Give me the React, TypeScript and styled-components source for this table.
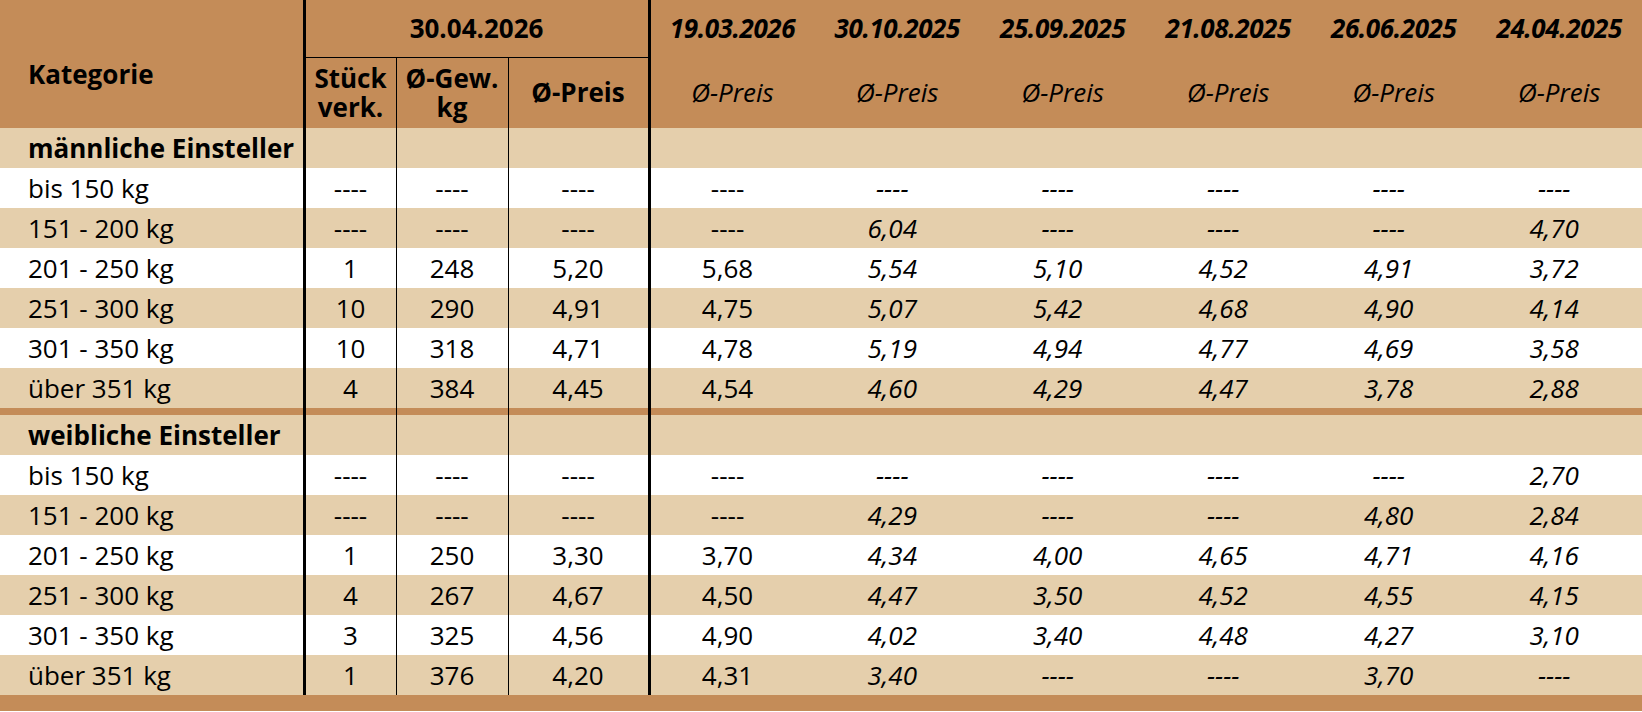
import React from 'react'
import styled, { createGlobalStyle } from 'styled-components'

const BROWN = '#c48c58'
const BEIGE = '#e5cfac'

const GlobalStyle = createGlobalStyle`
  html, body {
    margin: 0;
    padding: 0;
    background: #ffffff;
  }
  body {
    font-family: "Open Sans", "Liberation Sans", sans-serif;
    color: #000;
  }
`

const Table = styled.table`
  width: 1642px;
  border-collapse: collapse;
  table-layout: fixed;
  font-size: 26px;
`

const HeadRow = styled.tr<{ $h: number }>`
  height: ${p => p.$h}px;
  background: ${BROWN};
`

const Th = styled.th<{ $italic?: boolean; $weight?: number; $line?: 'thick' | 'thin'; $under?: boolean }>`
  padding: 0;
  font-weight: ${p => p.$weight ?? 700};
  font-style: ${p => (p.$italic ? 'italic' : 'normal')};
  letter-spacing: ${p => (p.$italic && (p.$weight ?? 700) === 700 ? '-0.4px' : 'normal')};
  text-align: center;
  vertical-align: middle;
  line-height: 29px;
  border-left: ${p => (p.$line === 'thick' ? '3px solid #000' : p.$line === 'thin' ? '1px solid #000' : 'none')};
  border-bottom: ${p => (p.$under ? '1px solid #000' : 'none')};
`

const KategorieTh = styled.th`
  padding: 20px 0 0 28px;
  text-align: left;
  vertical-align: middle;
  font-weight: 700;
`

const Row = styled.tr<{ $shade: boolean }>`
  height: 40px;
  background: ${p => (p.$shade ? BEIGE : '#ffffff')};
`

const BandRow = styled.tr<{ $h: number }>`
  height: ${p => p.$h}px;
  background: ${BROWN};
`

const Label = styled.td<{ $bold?: boolean }>`
  padding: 0 0 0 28px;
  font-weight: ${p => (p.$bold ? 700 : 400)};
  white-space: nowrap;
  line-height: 38px;
`

const Cell = styled.td<{ $italic?: boolean; $line?: 'thick' | 'thin'; $pad?: number }>`
  padding: 0 ${p => p.$pad ?? 0}px 0 0;
  text-align: center;
  font-style: ${p => (p.$italic ? 'italic' : 'normal')};
  line-height: 38px;
  border-left: ${p => (p.$line === 'thick' ? '3px solid #000' : p.$line === 'thin' ? '1px solid #000' : 'none')};
`

const BandCell = styled.td<{ $line?: 'thick' | 'thin' }>`
  padding: 0;
  border-left: ${p => (p.$line === 'thick' ? '3px solid #000' : p.$line === 'thin' ? '1px solid #000' : 'none')};
`

const dates = ['19.03.2026', '30.10.2025', '25.09.2025', '21.08.2025', '26.06.2025', '24.04.2025']
const lines: ('thick' | 'thin' | undefined)[] = ['thick', 'thin', 'thin', 'thick', undefined, undefined, undefined, undefined, undefined]

type Line = [string, string[]]

const D = '----'

const male: Line[] = [
  ['bis 150 kg', [D, D, D, D, D, D, D, D, D]],
  ['151 - 200 kg', [D, D, D, D, '6,04', D, D, D, '4,70']],
  ['201 - 250 kg', ['1', '248', '5,20', '5,68', '5,54', '5,10', '4,52', '4,91', '3,72']],
  ['251 - 300 kg', ['10', '290', '4,91', '4,75', '5,07', '5,42', '4,68', '4,90', '4,14']],
  ['301 - 350 kg', ['10', '318', '4,71', '4,78', '5,19', '4,94', '4,77', '4,69', '3,58']],
  ['über 351 kg', ['4', '384', '4,45', '4,54', '4,60', '4,29', '4,47', '3,78', '2,88']],
]

const female: Line[] = [
  ['bis 150 kg', [D, D, D, D, D, D, D, D, '2,70']],
  ['151 - 200 kg', [D, D, D, D, '4,29', D, D, '4,80', '2,84']],
  ['201 - 250 kg', ['1', '250', '3,30', '3,70', '4,34', '4,00', '4,65', '4,71', '4,16']],
  ['251 - 300 kg', ['4', '267', '4,67', '4,50', '4,47', '3,50', '4,52', '4,55', '4,15']],
  ['301 - 350 kg', ['3', '325', '4,56', '4,90', '4,02', '3,40', '4,48', '4,27', '3,10']],
  ['über 351 kg', ['1', '376', '4,20', '4,31', '3,40', D, D, '3,70', D]],
]

function Section({ title, rows }: { title: string; rows: Line[] }) {
  return (
    <>
      <Row $shade>
        <Label $bold>{title}</Label>
        {lines.map((l, i) => <Cell key={i} $line={l} />)}
      </Row>
      {rows.map(([label, values], r) => (
        <Row key={label} $shade={r % 2 === 1}>
          <Label>{label}</Label>
          {values.map((v, i) => (
            <Cell key={i} $line={lines[i]} $italic={i > 3} $pad={i >= 3 ? 10 : 0}>{v}</Cell>
          ))}
        </Row>
      ))}
    </>
  )
}

export default function App() {
  return (
    <>
      <GlobalStyle />
      <Table>
        <colgroup>
          <col style={{ width: 304 }} />
          <col style={{ width: 92 }} />
          <col style={{ width: 112 }} />
          <col style={{ width: 141 }} />
          {dates.map(d => <col key={d} />)}
        </colgroup>
        <thead>
          <HeadRow $h={57}>
            <KategorieTh rowSpan={2}>Kategorie</KategorieTh>
            <Th colSpan={3} $line="thick" $under>30.04.2026</Th>
            {dates.map((d, i) => (
              <Th key={d} $italic $line={i === 0 ? 'thick' : undefined}>{d}</Th>
            ))}
          </HeadRow>
          <HeadRow $h={71}>
            <Th $line="thick">Stück<br />verk.</Th>
            <Th $line="thin">Ø-Gew.<br />kg</Th>
            <Th $line="thin">Ø-Preis</Th>
            {dates.map((d, i) => (
              <Th key={d} $italic $weight={400} $line={i === 0 ? 'thick' : undefined}>Ø-Preis</Th>
            ))}
          </HeadRow>
        </thead>
        <tbody>
          <Section title="männliche Einsteller" rows={male} />
          <BandRow $h={7}>
            <BandCell />
            {lines.map((l, i) => <BandCell key={i} $line={l} />)}
          </BandRow>
          <Section title="weibliche Einsteller" rows={female} />
          <BandRow $h={16}>
            <BandCell colSpan={10} />
          </BandRow>
        </tbody>
      </Table>
    </>
  )
}
